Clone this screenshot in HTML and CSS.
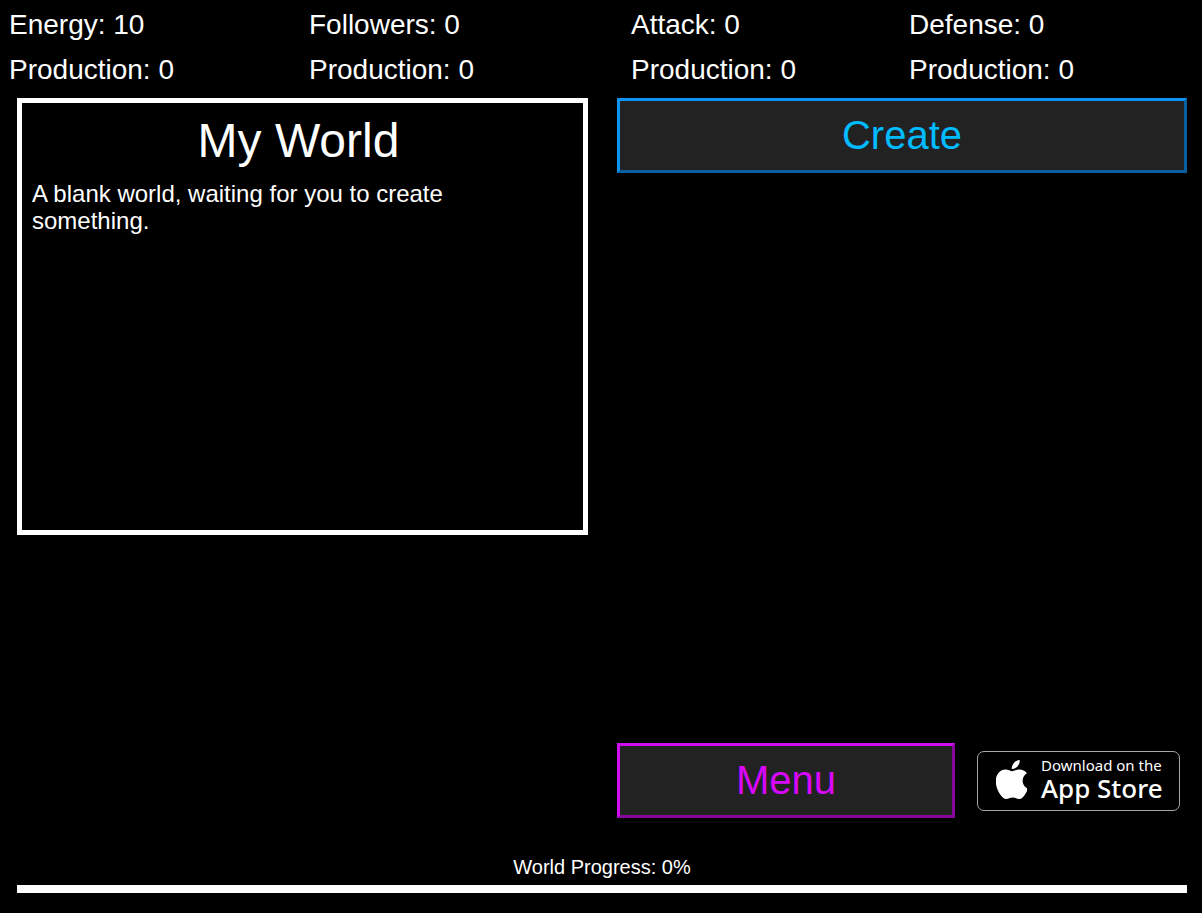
FILE: index.html
```html
<!DOCTYPE html>
<html lang="en">
<head>
<meta charset="utf-8">
<title>My World</title>
<link rel="stylesheet" href="styles.css">
</head>
<body>
<header class="stats">
  <div class="stat"><span>Energy: 10</span><span>Production: 0</span></div>
  <div class="stat"><span>Followers: 0</span><span>Production: 0</span></div>
  <div class="stat"><span>Attack: 0</span><span>Production: 0</span></div>
  <div class="stat"><span>Defense: 0</span><span>Production: 0</span></div>
</header>
<main class="board">
  <section class="world">
    <h1 class="world-title">My World</h1>
    <p class="world-text">A blank world, waiting for you to create something.</p>
  </section>
  <section class="actions">
    <button class="btn btn-create" type="button">Create</button>
    <div class="bottom-row">
      <button class="btn btn-menu" type="button">Menu</button>
      <a class="store" href="#">
        <svg class="apple" viewBox="4 2 15.6 20" preserveAspectRatio="none" aria-hidden="true"><path fill="#fff" d="M18.71 19.5c-.83 1.24-1.71 2.45-3.05 2.47-1.34.03-1.77-.79-3.29-.79-1.53 0-2 .77-3.27.82-1.31.05-2.3-1.32-3.14-2.53C4.25 17 2.94 12.45 4.7 9.39c.87-1.52 2.43-2.48 4.12-2.51 1.28-.02 2.5.87 3.29.87.78 0 2.26-1.07 3.81-.91.65.03 2.47.26 3.64 1.98-.09.06-2.17 1.28-2.15 3.81.03 3.02 2.65 4.03 2.68 4.04-.03.07-.42 1.44-1.38 2.83M13 3.5c.73-.83 1.94-1.46 2.94-1.5.13 1.17-.34 2.35-1.04 3.19-.69.85-1.83 1.51-2.95 1.42-.15-1.15.41-2.35 1.05-3.11z"/></svg>
        <span class="store-text"><span class="store-small">Download on the</span><span class="store-big">App Store</span></span>
      </a>
    </div>
  </section>
</main>
<footer class="progress">
  <div class="progress-label" id="progress-label">World Progress: 0%</div>
  <div class="progress-bar" role="progressbar" aria-labelledby="progress-label" aria-valuenow="0" aria-valuemin="0" aria-valuemax="100"></div>
</footer>
</body>
</html>
```
FILE: styles.css
```css
* { box-sizing: border-box; }
body {
  margin: 0;
  min-height: 100vh;
  display: flex;
  flex-direction: column;
  background: #000;
  color: #fff;
  font-family: "Liberation Sans", Arial, sans-serif;
}
.stats {
  display: grid;
  grid-template-columns: 300fr 322fr 278fr 293fr;
  padding: 2px 0 6px 9px;
  font-size: 28px;
  line-height: 45px;
}
.stat { display: flex; flex-direction: column; }
.board {
  flex: 1;
  display: grid;
  grid-template-columns: 1fr 1fr;
  gap: 28px;
  padding: 0 15px 0 17px;
}
.world {
  align-self: start;
  min-height: 437px;
  border: 5px solid #fff;
  padding: 10px 18px 10px 10px;
}
.world-title {
  margin: 0;
  font-size: 48px;
  font-weight: 400;
  line-height: 56px;
  text-align: center;
}
.world-text {
  margin: 11px 0 0;
  font-size: 24px;
  line-height: 27px;
  max-width: 500px;
}
.actions {
  display: flex;
  flex-direction: column;
  justify-content: space-between;
  padding-left: 1px;
}
.btn {
  height: 75px;
  padding: 0;
  background: #222;
  font-family: inherit;
  font-size: 40px;
}
.btn-create { border: 3px outset #0d93f4; color: #0bf; }
.btn-menu { flex: 1; border: 3px outset #d00cf0; color: #d808fa; }
.bottom-row {
  display: flex;
  align-items: center;
  gap: 22px;
  padding-right: 7px;
}
.store {
  display: flex;
  align-items: center;
  gap: 14px;
  width: 203px;
  height: 60px;
  padding: 0 0 2px 18px;
  border: 1px solid #a6a6a6;
  border-radius: 7px;
  color: #fff;
  text-decoration: none;
  font-family: "Noto Sans", "Open Sans", sans-serif;
}
.apple { width: 31px; height: 39px; }
.store-text { display: flex; flex-direction: column; padding-bottom: 4px; white-space: nowrap; }
.store-small { font-size: 15px; line-height: 20px; }
.store-big { font-size: 26px; font-weight: 500; line-height: 26px; }
.progress {
  padding: 38px 15px 20px 17px;
  text-align: center;
}
.progress-label { font-size: 20px; line-height: 22px; }
.progress-bar { height: 8px; margin-top: 7px; background: #fff; }
```
